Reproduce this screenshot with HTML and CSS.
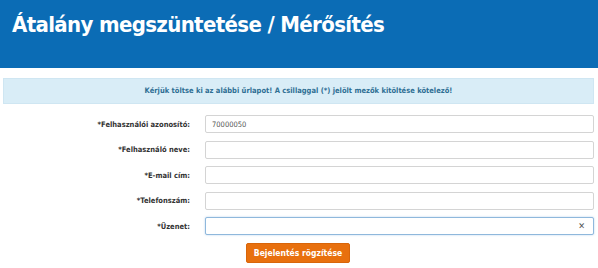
FILE: index.html
```html
<!DOCTYPE html>
<html lang="hu">
<head>
<meta charset="utf-8">
<title>Átalány megszüntetése / Mérősítés</title>
<link rel="stylesheet" href="styles.css">
</head>
<body>
<header class="header">
  <h1 class="title">Átalány megszüntetése / Mérősítés</h1>
</header>
<main class="content">
  <div class="notice">Kérjük töltse ki az alábbi űrlapot! A csillaggal (*) jelölt mezők kitöltése kötelező!</div>
  <form class="form">
    <div class="row">
      <label class="label">*Felhasználói azonosító:</label>
      <div class="field"><input class="input" type="text" value="70000050"></div>
    </div>
    <div class="row">
      <label class="label">*Felhasználó neve:</label>
      <div class="field"><input class="input" type="text"></div>
    </div>
    <div class="row">
      <label class="label">*E-mail cím:</label>
      <div class="field"><input class="input" type="text"></div>
    </div>
    <div class="row">
      <label class="label">*Telefonszám:</label>
      <div class="field"><input class="input" type="text"></div>
    </div>
    <div class="row">
      <label class="label">*Üzenet:</label>
      <div class="field"><input class="input input-focus" type="text"><span class="clear">✕</span></div>
    </div>
    <div class="actions">
      <button class="button" type="button">Bejelentés rögzítése</button>
    </div>
  </form>
</main>
</body>
</html>
```
FILE: styles.css
```css
html, body {
  margin: 0;
  padding: 0;
  background: #ffffff;
  font-family: "DejaVu Sans Condensed", "DejaVu Sans", Verdana, sans-serif;
  font-stretch: condensed;
}
.header {
  height: 68px;
  background: #0b6cb5;
  box-sizing: border-box;
  padding: 10px 0 0 12px;
}
.title {
  margin: 0;
  color: #ffffff;
  font-size: 22px;
  font-weight: bold;
  line-height: 30px;
  letter-spacing: -0.65px;
}
.content {
  padding: 10px 4px 0 3px;
}
.notice {
  height: 26px;
  box-sizing: border-box;
  background: #d9edf7;
  border: 1px solid #cfe6f2;
  color: #2f6f94;
  font-size: 7.5px;
  font-weight: bold;
  text-align: center;
  line-height: 24px;
}
.form {
  margin: 11px 0 0 0;
  display: flex;
  flex-direction: column;
  gap: 7.5px;
}
.row {
  display: grid;
  grid-template-columns: 187px 1fr;
  column-gap: 15px;
  align-items: center;
}
.label {
  text-align: right;
  font-size: 7.5px;
  font-weight: bold;
  color: #333333;
}
.field {
  position: relative;
}
.input {
  display: block;
  width: 100%;
  height: 18px;
  box-sizing: border-box;
  border: 1px solid #d4d4d4;
  border-radius: 2px;
  padding: 0 6px;
  font-family: "DejaVu Sans Condensed", "DejaVu Sans", Verdana, sans-serif;
  font-stretch: condensed;
  font-size: 7.5px;
  color: #555555;
  background: #ffffff;
  outline: none;
}
.input-focus {
  border-color: #8fb8dc;
  box-shadow: 0 0 2px rgba(102, 160, 220, 0.5);
}
.clear {
  position: absolute;
  right: 9px;
  top: 3px;
  font-size: 9px;
  line-height: 12px;
  color: #555555;
  font-weight: bold;
}
.actions {
  display: flex;
  padding-left: 243px;
}
.button {
  width: 104px;
  height: 20px;
  background: #e8700e;
  border: 1px solid #d8650a;
  border-radius: 2px;
  color: #ffffff;
  font-family: "DejaVu Sans Condensed", "DejaVu Sans", Verdana, sans-serif;
  font-stretch: condensed;
  font-size: 8.5px;
  font-weight: bold;
  padding: 0;
}
```
